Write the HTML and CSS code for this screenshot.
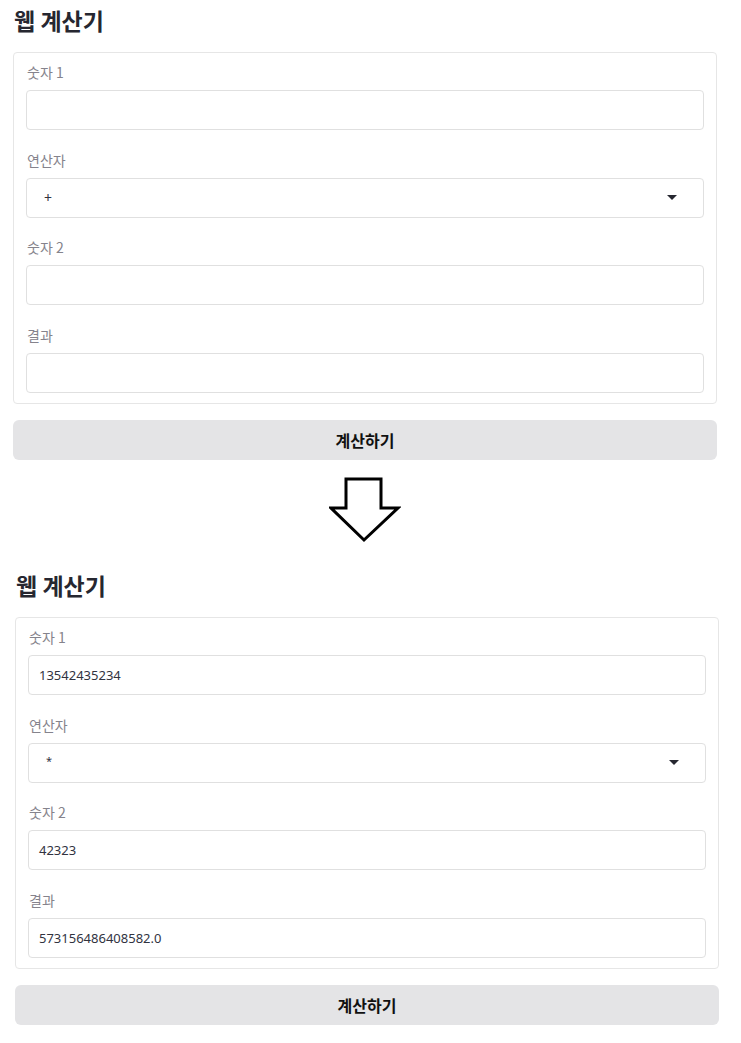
FILE: index.html
```html
<!DOCTYPE html>
<html>
  <head>
    <meta charset="UTF-8" />
    <title>웹 계산기</title>
    <link rel="stylesheet" href="styles.css">
  </head>

  <body>
    <div class="shot shot-before">
      <h1>웹 계산기</h1>

      <div class="form">
        <div class="field">
          <label>숫자 1</label>
          <div class="input"></div>
        </div>
        <div class="field">
          <label>연산자</label>
          <div class="input select">
            <span>+</span>
            <span class="caret"></span>
          </div>
        </div>
        <div class="field">
          <label>숫자 2</label>
          <div class="input"></div>
        </div>
        <div class="field">
          <label>결과</label>
          <div class="input"></div>
        </div>
      </div>

      <button class="calc">계산하기</button>
    </div>

    <div class="arrow">
      <svg width="72" height="66" viewBox="0 0 72 66">
        <path d="M17 2 H52 V31 H69 L35 63 L2 31 H17 Z" fill="#fff" stroke="#000" stroke-width="3" stroke-linejoin="miter" />
      </svg>
    </div>

    <div class="shot shot-after">
      <h1>웹 계산기</h1>

      <div class="form">
        <div class="field">
          <label>숫자 1</label>
          <div class="input">13542435234</div>
        </div>
        <div class="field">
          <label>연산자</label>
          <div class="input select">
            <span class="star">*</span>
            <span class="caret"></span>
          </div>
        </div>
        <div class="field">
          <label>숫자 2</label>
          <div class="input">42323</div>
        </div>
        <div class="field">
          <label>결과</label>
          <div class="input">573156486408582.0</div>
        </div>
      </div>

      <button class="calc">계산하기</button>
    </div>
  </body>
</html>
```

FILE: styles.css
```css
body {
  font-family: "Noto Sans", "Noto Sans CJK KR", sans-serif;
  margin: 0;
  padding: 0;
  color: #31333f;
  background: #fff;
}

.shot {
  width: 704px;
}

.shot-before {
  margin-left: 13px;
  padding-top: 4px;
}

.shot-after {
  margin-left: 15px;
  padding-top: 26px;
}

h1 {
  font-family: "Noto Sans CJK KR", sans-serif;
  font-size: 23px;
  font-weight: 700;
  line-height: 32px;
  height: 32px;
  margin: 0 0 16px 1px;
  color: #262730;
}

.form {
  border: 1px solid #e6e6e6;
  border-radius: 4px;
  padding: 9px 12px 10px 12px;
  display: flex;
  flex-direction: column;
  gap: 19.67px;
}

.field label {
  display: block;
  font-family: "Noto Sans CJK KR", sans-serif;
  font-size: 14px;
  line-height: 20px;
  height: 20px;
  margin: 0 0 8px 1px;
  color: #85838c;
}

.input {
  box-sizing: border-box;
  height: 40px;
  border: 1px solid #e0e0e0;
  border-radius: 4px;
  padding: 0 10px;
  display: flex;
  align-items: center;
  font-size: 13px;
  color: #31333f;
}

.select {
  justify-content: space-between;
  padding: 0 26px 0 17px;
  font-size: 14px;
}

.select .star {
  font-size: 11px;
  margin-bottom: 4px;
}

.caret {
  width: 0;
  height: 0;
  border-left: 5px solid transparent;
  border-right: 5px solid transparent;
  border-top: 5px solid #262730;
}

.calc {
  display: block;
  width: 100%;
  height: 40px;
  margin-top: 16px;
  border: none;
  border-radius: 6px;
  background-color: #e4e4e6;
  font-family: "Noto Sans CJK KR", sans-serif;
  font-size: 16px;
  font-weight: 700;
  color: #111;
  cursor: pointer;
}

.arrow {
  width: 704px;
  margin-left: 13px;
  padding-top: 17px;
  display: flex;
  justify-content: center;
}

.arrow svg {
  display: block;
}
```
